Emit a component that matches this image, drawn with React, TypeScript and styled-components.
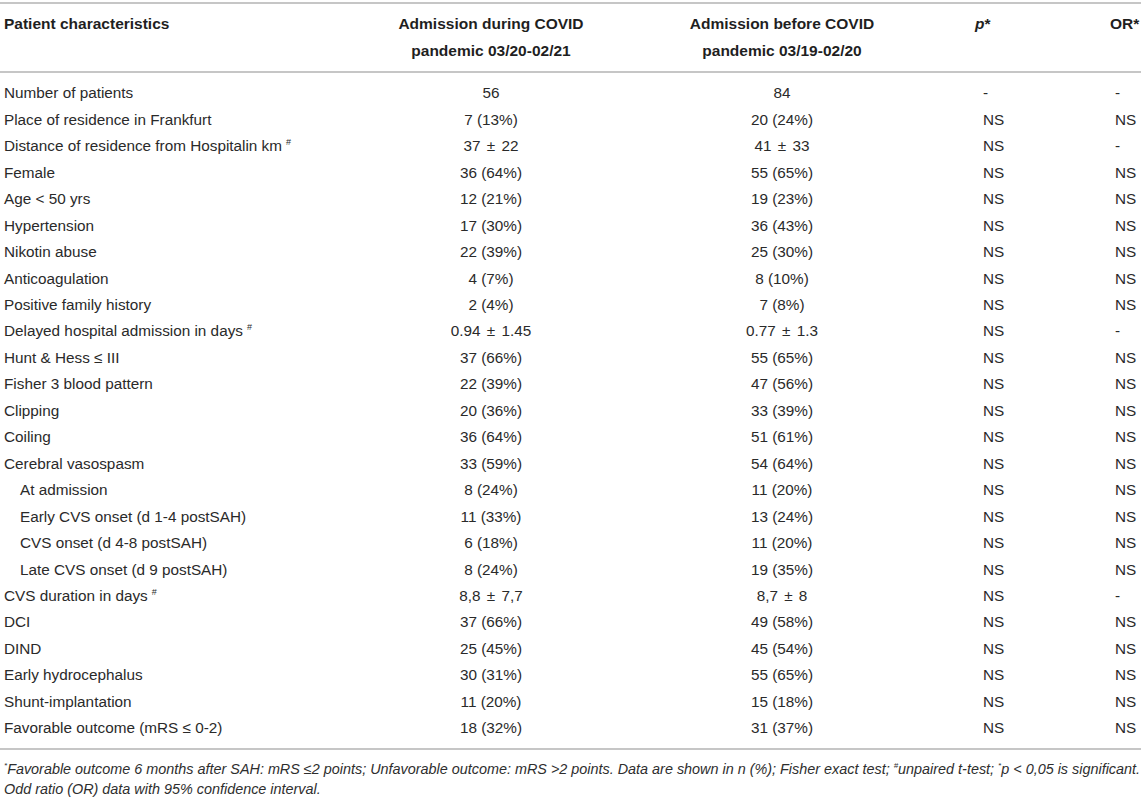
import React from "react";
import styled, { createGlobalStyle } from "styled-components";

const GlobalStyle = createGlobalStyle`
  html, body { margin: 0; padding: 0; background: #ffffff; }
  body { font-family: "Liberation Sans", Arial, Helvetica, sans-serif; color: #2b2b2b; }
`;

const Page = styled.div`
  width: 1141px;
  padding-top: 2px;
`;

const Table = styled.div`
  border-top: 2px solid #c6c6c6;
  border-bottom: 2px solid #c6c6c6;
`;

const columns = "393px 196px 386px 135px 1fr";

const HeadRow = styled.div`
  display: grid;
  grid-template-columns: ${columns};
  padding: 7px 0 7px;
  border-bottom: 2px solid #c6c6c6;
  font-weight: bold;
  font-size: 15.5px;
  line-height: 26.6px;
  color: #1f1f1f;
`;

const HeadCell = styled.div<{ $align?: "left" | "center" }>`
  text-align: ${(p) => p.$align ?? "left"};
  padding-left: ${(p) => (p.$align === "center" ? "0" : "4px")};
  white-space: nowrap;
`;

const HeadStat = styled.div`
  text-align: left;
  padding-left: 0;
`;

const Body = styled.div`
  padding: 7px 0 6.5px;
`;

const Row = styled.div`
  display: grid;
  grid-template-columns: ${columns};
  height: 26.46px;
  align-items: center;
  font-size: 15.3px;
  color: #2a2a2a;
`;

const Label = styled.div<{ $indent?: boolean }>`
  padding-left: ${(p) => (p.$indent ? "20px" : "4px")};
  white-space: nowrap;
`;

const Value = styled.div`
  text-align: center;
  white-space: nowrap;
`;

const Stat = styled.div<{ $pad: number }>`
  padding-left: ${(p) => p.$pad}px;
`;

const Sup = styled.sup`
  font-size: 9px;
  vertical-align: 6px;
  line-height: 0;
  margin-left: 4px;
`;

const Pm = styled.span`
  margin: 0 2px;
`;

const Footnote = styled.div`
  margin-top: 9px;
  padding-left: 4px;
  font-style: italic;
  font-size: 14.4px;
  line-height: 20px;
  color: #2e2e2e;
  white-space: nowrap;
`;

const FootSup = styled.sup`
  font-size: 8px;
  vertical-align: 6px;
  line-height: 0;
`;

type R = { label: React.ReactNode; a: React.ReactNode; b: React.ReactNode; p: string; or: string; indent?: boolean };

const hash = <Sup>#</Sup>;
const pm = (x: string, y: string) => (
  <>
    {x} <Pm>±</Pm> {y}
  </>
);

const rows: R[] = [
  { label: "Number of patients", a: "56", b: "84", p: "-", or: "-" },
  { label: "Place of residence in Frankfurt", a: "7 (13%)", b: "20 (24%)", p: "NS", or: "NS" },
  { label: <>Distance of residence from Hospitalin km{hash}</>, a: pm("37", "22"), b: pm("41", "33"), p: "NS", or: "-" },
  { label: "Female", a: "36 (64%)", b: "55 (65%)", p: "NS", or: "NS" },
  { label: "Age < 50 yrs", a: "12 (21%)", b: "19 (23%)", p: "NS", or: "NS" },
  { label: "Hypertension", a: "17 (30%)", b: "36 (43%)", p: "NS", or: "NS" },
  { label: "Nikotin abuse", a: "22 (39%)", b: "25 (30%)", p: "NS", or: "NS" },
  { label: "Anticoagulation", a: "4 (7%)", b: "8 (10%)", p: "NS", or: "NS" },
  { label: "Positive family history", a: "2 (4%)", b: "7 (8%)", p: "NS", or: "NS" },
  { label: <>Delayed hospital admission in days{hash}</>, a: pm("0.94", "1.45"), b: pm("0.77", "1.3"), p: "NS", or: "-" },
  { label: "Hunt & Hess ≤ III", a: "37 (66%)", b: "55 (65%)", p: "NS", or: "NS" },
  { label: "Fisher 3 blood pattern", a: "22 (39%)", b: "47 (56%)", p: "NS", or: "NS" },
  { label: "Clipping", a: "20 (36%)", b: "33 (39%)", p: "NS", or: "NS" },
  { label: "Coiling", a: "36 (64%)", b: "51 (61%)", p: "NS", or: "NS" },
  { label: "Cerebral vasospasm", a: "33 (59%)", b: "54 (64%)", p: "NS", or: "NS" },
  { label: "At admission", a: "8 (24%)", b: "11 (20%)", p: "NS", or: "NS", indent: true },
  { label: "Early CVS onset (d 1-4 postSAH)", a: "11 (33%)", b: "13 (24%)", p: "NS", or: "NS", indent: true },
  { label: "CVS onset (d 4-8 postSAH)", a: "6 (18%)", b: "11 (20%)", p: "NS", or: "NS", indent: true },
  { label: "Late CVS onset (d 9 postSAH)", a: "8 (24%)", b: "19 (35%)", p: "NS", or: "NS", indent: true },
  { label: <>CVS duration in days{hash}</>, a: pm("8,8", "7,7"), b: pm("8,7", "8"), p: "NS", or: "-" },
  { label: "DCI", a: "37 (66%)", b: "49 (58%)", p: "NS", or: "NS" },
  { label: "DIND", a: "25 (45%)", b: "45 (54%)", p: "NS", or: "NS" },
  { label: "Early hydrocephalus", a: "30 (31%)", b: "55 (65%)", p: "NS", or: "NS" },
  { label: "Shunt-implantation", a: "11 (20%)", b: "15 (18%)", p: "NS", or: "NS" },
  { label: "Favorable outcome (mRS ≤ 0-2)", a: "18 (32%)", b: "31 (37%)", p: "NS", or: "NS" },
];

export default function App() {
  return (
    <>
      <GlobalStyle />
      <Page>
        <Table>
          <HeadRow>
            <HeadCell>Patient characteristics</HeadCell>
            <HeadCell $align="center">
              Admission during COVID
              <br />
              pandemic 03/20-02/21
            </HeadCell>
            <HeadCell $align="center">
              Admission before COVID
              <br />
              pandemic 03/19-02/20
            </HeadCell>
            <HeadStat>
              <i>p</i>*
            </HeadStat>
            <HeadStat>OR*</HeadStat>
          </HeadRow>
          <Body>
            {rows.map((r, i) => (
              <Row key={i}>
                <Label $indent={r.indent}>{r.label}</Label>
                <Value>{r.a}</Value>
                <Value>{r.b}</Value>
                <Stat $pad={8}>{r.p}</Stat>
                <Stat $pad={5}>{r.or}</Stat>
              </Row>
            ))}
          </Body>
        </Table>
        <Footnote>
          <FootSup>*</FootSup>Favorable outcome 6 months after SAH: mRS ≤2 points; Unfavorable outcome: mRS &gt;2 points. Data are shown in n (%); Fisher exact test; <FootSup>#</FootSup>unpaired t-test; <FootSup>*</FootSup>p &lt; 0,05 is significant.
          <br />
          Odd ratio (OR) data with 95% confidence interval.
        </Footnote>
      </Page>
    </>
  );
}
